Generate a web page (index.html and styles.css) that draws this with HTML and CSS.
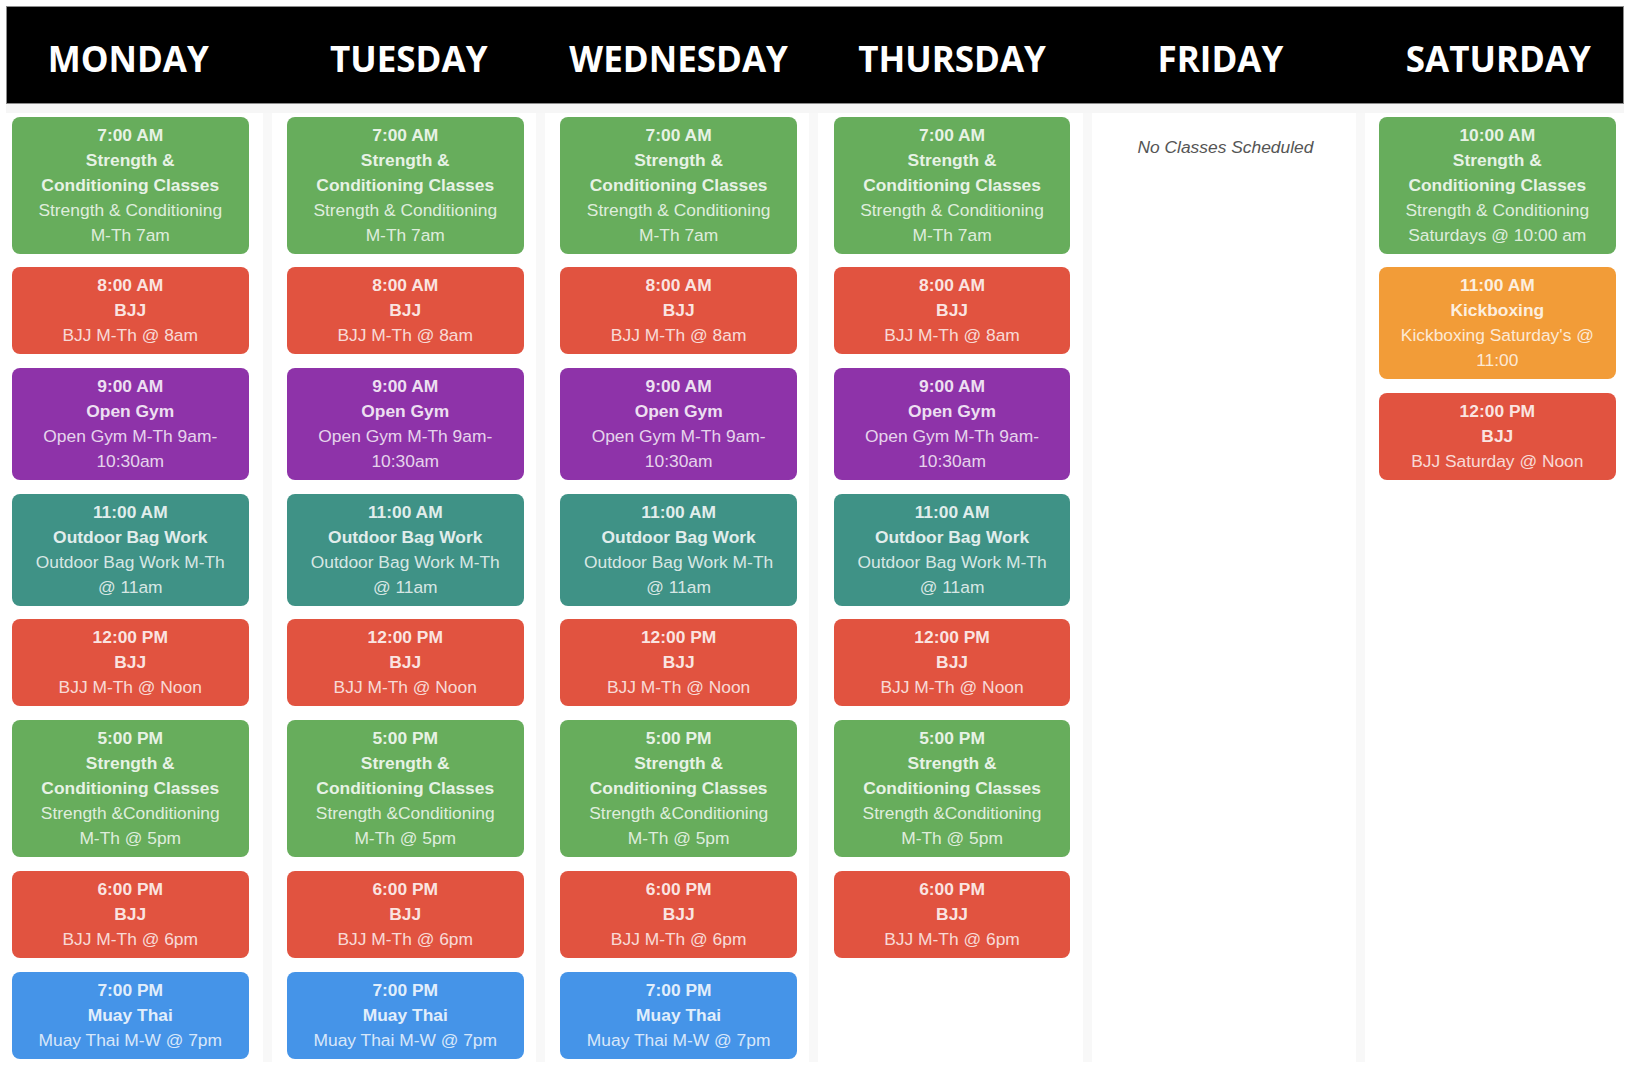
FILE: index.html
```html
<!DOCTYPE html>
<html lang="en">
<head>
<meta charset="utf-8">
<title>Class Schedule</title>
<link rel="stylesheet" href="styles.css">
</head>
<body>
<div class="schedule">
  <div class="days">
    <div class="day-head first"><span>MONDAY</span></div>
    <div class="day-head shift-right"><span>TUESDAY</span></div>
    <div class="day-head"><span>WEDNESDAY</span></div>
    <div class="day-head"><span>THURSDAY</span></div>
    <div class="day-head shift-left"><span>FRIDAY</span></div>
    <div class="day-head last"><span>SATURDAY</span></div>
  </div>
  <div class="columns">
    <div class="col first">
      <div class="card green"><div class="time">7:00 AM</div><div class="title">Strength &amp; Conditioning Classes</div><div class="desc">Strength &amp; Conditioning M-Th 7am</div></div>
      <div class="card red"><div class="time">8:00 AM</div><div class="title">BJJ</div><div class="desc">BJJ M-Th @ 8am</div></div>
      <div class="card purple"><div class="time">9:00 AM</div><div class="title">Open Gym</div><div class="desc">Open Gym M-Th 9am-10:30am</div></div>
      <div class="card teal"><div class="time">11:00 AM</div><div class="title">Outdoor Bag Work</div><div class="desc">Outdoor Bag Work M-Th @ 11am</div></div>
      <div class="card red"><div class="time">12:00 PM</div><div class="title">BJJ</div><div class="desc">BJJ M-Th @ Noon</div></div>
      <div class="card green"><div class="time">5:00 PM</div><div class="title">Strength &amp; Conditioning Classes</div><div class="desc">Strength &amp;Conditioning M-Th @ 5pm</div></div>
      <div class="card red"><div class="time">6:00 PM</div><div class="title">BJJ</div><div class="desc">BJJ M-Th @ 6pm</div></div>
      <div class="card blue"><div class="time">7:00 PM</div><div class="title">Muay Thai</div><div class="desc">Muay Thai M-W @ 7pm</div></div>
    </div>
    <div class="col">
      <div class="card green"><div class="time">7:00 AM</div><div class="title">Strength &amp; Conditioning Classes</div><div class="desc">Strength &amp; Conditioning M-Th 7am</div></div>
      <div class="card red"><div class="time">8:00 AM</div><div class="title">BJJ</div><div class="desc">BJJ M-Th @ 8am</div></div>
      <div class="card purple"><div class="time">9:00 AM</div><div class="title">Open Gym</div><div class="desc">Open Gym M-Th 9am-10:30am</div></div>
      <div class="card teal"><div class="time">11:00 AM</div><div class="title">Outdoor Bag Work</div><div class="desc">Outdoor Bag Work M-Th @ 11am</div></div>
      <div class="card red"><div class="time">12:00 PM</div><div class="title">BJJ</div><div class="desc">BJJ M-Th @ Noon</div></div>
      <div class="card green"><div class="time">5:00 PM</div><div class="title">Strength &amp; Conditioning Classes</div><div class="desc">Strength &amp;Conditioning M-Th @ 5pm</div></div>
      <div class="card red"><div class="time">6:00 PM</div><div class="title">BJJ</div><div class="desc">BJJ M-Th @ 6pm</div></div>
      <div class="card blue"><div class="time">7:00 PM</div><div class="title">Muay Thai</div><div class="desc">Muay Thai M-W @ 7pm</div></div>
    </div>
    <div class="col">
      <div class="card green"><div class="time">7:00 AM</div><div class="title">Strength &amp; Conditioning Classes</div><div class="desc">Strength &amp; Conditioning M-Th 7am</div></div>
      <div class="card red"><div class="time">8:00 AM</div><div class="title">BJJ</div><div class="desc">BJJ M-Th @ 8am</div></div>
      <div class="card purple"><div class="time">9:00 AM</div><div class="title">Open Gym</div><div class="desc">Open Gym M-Th 9am-10:30am</div></div>
      <div class="card teal"><div class="time">11:00 AM</div><div class="title">Outdoor Bag Work</div><div class="desc">Outdoor Bag Work M-Th @ 11am</div></div>
      <div class="card red"><div class="time">12:00 PM</div><div class="title">BJJ</div><div class="desc">BJJ M-Th @ Noon</div></div>
      <div class="card green"><div class="time">5:00 PM</div><div class="title">Strength &amp; Conditioning Classes</div><div class="desc">Strength &amp;Conditioning M-Th @ 5pm</div></div>
      <div class="card red"><div class="time">6:00 PM</div><div class="title">BJJ</div><div class="desc">BJJ M-Th @ 6pm</div></div>
      <div class="card blue"><div class="time">7:00 PM</div><div class="title">Muay Thai</div><div class="desc">Muay Thai M-W @ 7pm</div></div>
    </div>
    <div class="col">
      <div class="card green"><div class="time">7:00 AM</div><div class="title">Strength &amp; Conditioning Classes</div><div class="desc">Strength &amp; Conditioning M-Th 7am</div></div>
      <div class="card red"><div class="time">8:00 AM</div><div class="title">BJJ</div><div class="desc">BJJ M-Th @ 8am</div></div>
      <div class="card purple"><div class="time">9:00 AM</div><div class="title">Open Gym</div><div class="desc">Open Gym M-Th 9am-10:30am</div></div>
      <div class="card teal"><div class="time">11:00 AM</div><div class="title">Outdoor Bag Work</div><div class="desc">Outdoor Bag Work M-Th @ 11am</div></div>
      <div class="card red"><div class="time">12:00 PM</div><div class="title">BJJ</div><div class="desc">BJJ M-Th @ Noon</div></div>
      <div class="card green"><div class="time">5:00 PM</div><div class="title">Strength &amp; Conditioning Classes</div><div class="desc">Strength &amp;Conditioning M-Th @ 5pm</div></div>
      <div class="card red"><div class="time">6:00 PM</div><div class="title">BJJ</div><div class="desc">BJJ M-Th @ 6pm</div></div>
    </div>
    <div class="col">
      <div class="empty">No Classes Scheduled</div>
    </div>
    <div class="col last">
      <div class="card green"><div class="time">10:00 AM</div><div class="title">Strength &amp; Conditioning Classes</div><div class="desc">Strength &amp; Conditioning Saturdays @ 10:00 am</div></div>
      <div class="card orange"><div class="time">11:00 AM</div><div class="title">Kickboxing</div><div class="desc">Kickboxing Saturday's @ 11:00</div></div>
      <div class="card red"><div class="time">12:00 PM</div><div class="title">BJJ</div><div class="desc">BJJ Saturday @ Noon</div></div>
    </div>
  </div>
</div>
</body>
</html>
```

FILE: styles.css
```css
html, body {
  background: #ffffff;
}

body {
  margin: 6px 0 0 6px;
}

.schedule {
  width: 1618px;
}

/* ---------- header ---------- */
.days {
  display: flex;
  box-sizing: border-box;
  height: 98px;
  background: #000000;
  border: 1px solid #8c8c8c;
}

.day-head {
  flex: none;
  width: 236.5px;
  padding: 6px 21.4px 0 15.5px;
  display: flex;
  align-items: center;
  justify-content: center;
}

.day-head.first {
  padding-left: 3px;
  padding-right: 25px;
}

.day-head.shift-right {
  padding-left: 19px;
  padding-right: 17.9px;
}

.day-head.shift-left {
  padding-left: 10.5px;
  padding-right: 26.4px;
}

.day-head.last {
  padding-left: 15px;
  padding-right: 5.5px;
}

.day-head span {
  font-family: "Open Sans", "DejaVu Sans", sans-serif;
  font-weight: 700;
  font-size: 35px;
  line-height: 35px;
  color: #ffffff;
  white-space: nowrap;
}

/* ---------- columns ---------- */
.columns {
  display: flex;
  align-items: stretch;
  border-top: 9px solid #f6f6f6;
}

.col {
  flex: none;
  width: 236.5px;
  padding: 3.7px 12.4px 3.5px 15.5px;
  border-right: 9px solid #f8f8f8;
  display: flex;
  flex-direction: column;
  gap: 13.7px;
}

.col.first {
  padding-left: 6px;
  padding-right: 14px;
}

.col.last {
  padding-left: 14px;
  padding-right: 8.5px;
  border-right: none;
}

/* ---------- cards ---------- */
.card {
  box-sizing: border-box;
  border-radius: 8px;
  padding: 6px 20px;
  text-align: center;
  font-family: "Liberation Sans", Arial, sans-serif;
  font-size: 17.4px;
  line-height: 25px;
}

.time,
.title {
  font-weight: 700;
  color: rgba(255, 255, 255, 0.86);
}

.desc {
  font-weight: 400;
  color: rgba(255, 255, 255, 0.8);
}

.green  { background: #67ad5c; }
.red    { background: #e15340; }
.purple { background: #8e33a9; }
.teal   { background: #3f9286; }
.blue   { background: #4594e8; }
.orange { background: #f29c38; }

.empty {
  margin-top: 18.5px;
  text-align: center;
  font-family: "Liberation Sans", Arial, sans-serif;
  font-style: italic;
  font-size: 17.4px;
  line-height: 25px;
  color: #555555;
}
```
